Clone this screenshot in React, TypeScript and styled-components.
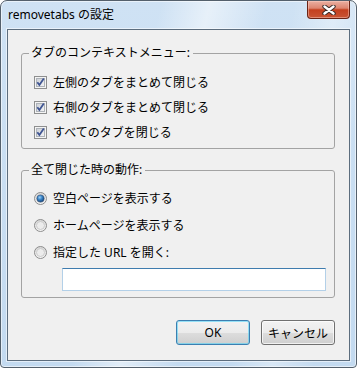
import styled, { createGlobalStyle } from 'styled-components';

const GlobalStyle = createGlobalStyle`
  html, body {
    margin: 0;
    padding: 0;
    background: #ffffff;
  }
  * {
    box-sizing: border-box;
  }
`;

const uiFont = `"Noto Sans", "Noto Sans CJK JP", sans-serif`;

const Window = styled.div`
  width: 357px;
  height: 368px;
  display: flex;
  flex-direction: column;
  padding: 0 6px 6px 6px;
  border: 1px solid #54606c;
  border-radius: 7px 7px 4px 4px;
  background:
    linear-gradient(104deg, rgba(255, 255, 255, 0) 36%, rgba(255, 255, 255, 0.5) 47%, rgba(255, 255, 255, 0) 60%),
    linear-gradient(100deg, rgba(255, 255, 255, 0) 70%, rgba(255, 255, 255, 0.35) 80%, rgba(255, 255, 255, 0) 90%),
    linear-gradient(to bottom, #cfe2f4 0%, #c3daf0 100%);
  box-shadow: inset 0 0 0 1px rgba(255, 255, 255, 0.55);
  font-family: ${uiFont};
`;

const TitleBar = styled.div`
  height: 28px;
  display: flex;
  align-items: flex-start;
  padding-left: 1px;
`;

const Title = styled.div`
  flex: 1;
  font-size: 12px;
  line-height: 16px;
  padding-top: 6px;
  color: #000;
`;

const CloseButton = styled.div`
  width: 43px;
  height: 18px;
  display: flex;
  align-items: center;
  justify-content: center;
  border: 1px solid #6a2416;
  border-top: none;
  border-radius: 0 0 4px 4px;
  background: linear-gradient(
    to bottom,
    #eab0a2 0%,
    #dd8570 42%,
    #c4401f 52%,
    #c95535 100%
  );
  box-shadow: inset 0 0 0 1px rgba(255, 210, 200, 0.45);
`;

const Client = styled.div`
  flex: 1;
  display: flex;
  flex-direction: column;
  border: 1px solid #5c6d7e;
  background: #f0f0f0;
  padding: 15px 14px 0 13px;
  box-shadow: 0 0 0 1px rgba(255, 255, 255, 0.55);
`;

const Group = styled.fieldset<{ $top: number }>`
  margin: ${({ $top }) => $top}px 0 0 0;
  padding: 0 8px 6px 12px;
  border: 1px solid #a3a3a3;
  border-radius: 3px;
  min-inline-size: 0;
  display: flex;
  flex-direction: column;
`;

const Legend = styled.legend`
  font-size: 12px;
  line-height: 16px;
  padding: 0 3px 0 2px;
  margin-left: -5px;
  color: #000;
`;

const OptionList = styled.div<{ $top: number; $gap: number }>`
  display: flex;
  flex-direction: column;
  gap: ${({ $gap }) => $gap}px;
  margin-top: ${({ $top }) => $top}px;
`;

const Option = styled.label`
  height: 20px;
  display: flex;
  align-items: center;
  gap: 6px;
  font-size: 12px;
  color: #000;
`;

const UrlInput = styled.div`
  margin: 6px 0 0 28px;
  height: 23px;
  background: #fff;
  border: 1px solid #b3d0e8;
  border-top-color: #3f7cae;
`;

const ButtonRow = styled.div`
  display: flex;
  justify-content: flex-end;
  gap: 11px;
  margin-top: 22px;
  padding-right: 0;
`;

const Button = styled.div<{ $default?: boolean }>`
  width: 74px;
  height: 25px;
  display: flex;
  align-items: center;
  justify-content: center;
  font-size: 12px;
  color: #000;
  border: 1px solid ${({ $default }) => ($default ? '#3c7fb1' : '#707070')};
  border-radius: 3px;
  background: linear-gradient(
    to bottom,
    #f2f2f2 0%,
    #ebebeb 50%,
    #dddddd 51%,
    #cfcfcf 100%
  );
  box-shadow: inset 0 0 0 1px
    ${({ $default }) => ($default ? 'rgba(72, 209, 249, 0.55)' : 'rgba(255, 255, 255, 0.7)')};
`;

const CloseGlyph = () => (
  <svg width="14" height="10" viewBox="0 0 14 10">
    <path d="M2.5 1.5 L11.5 8.5 M11.5 1.5 L2.5 8.5" stroke="#3a2a28" strokeWidth="4.4" strokeLinecap="round" />
    <path d="M2.5 1.5 L11.5 8.5 M11.5 1.5 L2.5 8.5" stroke="#ffffff" strokeWidth="2.4" strokeLinecap="round" />
  </svg>
);

const CheckBox = () => (
  <svg width="13" height="13" viewBox="0 0 13 13">
    <defs>
      <linearGradient id="cbIn" x1="0" y1="0" x2="1" y2="1">
        <stop offset="0" stopColor="#cbcfd5" />
        <stop offset="1" stopColor="#f6f6f6" />
      </linearGradient>
    </defs>
    <rect x="0.5" y="0.5" width="12" height="12" fill="#f4f4f4" stroke="#8e8f8f" />
    <rect x="2.5" y="2.5" width="8" height="8" fill="url(#cbIn)" stroke="#aeb3b9" />
    <path d="M3.3 6.2 L5.4 8.9 L9.8 2.6" fill="none" stroke="#3f5593" strokeWidth="1.8" />
  </svg>
);

const Radio = ({ checked }: { checked?: boolean }) => (
  <svg width="13" height="13" viewBox="0 0 13 13">
    <defs>
      <linearGradient id="rdOut" x1="0" y1="0" x2="0" y2="1">
        <stop offset="0" stopColor="#d6d6d6" />
        <stop offset="1" stopColor="#f7f7f7" />
      </linearGradient>
      <radialGradient id="rdDot" cx="0.4" cy="0.35" r="0.7">
        <stop offset="0" stopColor="#9fd0f5" />
        <stop offset="0.45" stopColor="#3a85c8" />
        <stop offset="1" stopColor="#123f73" />
      </radialGradient>
    </defs>
    <circle cx="6.5" cy="6.5" r="6" fill="url(#rdOut)" stroke="#8d8d8d" />
    <circle cx="6.5" cy="6.5" r="4" fill="#ececec" stroke="#c4c4c4" strokeWidth="0.8" />
    {checked && <circle cx="6.5" cy="6.5" r="3.6" fill="url(#rdDot)" stroke="#2b4f7a" strokeWidth="0.6" />}
  </svg>
);

const App = () => {
  return (
    <>
      <GlobalStyle />
      <Window>
        <TitleBar>
          <Title>removetabs の設定</Title>
          <CloseButton>
            <CloseGlyph />
          </CloseButton>
        </TitleBar>
        <Client>
          <Group $top={0}>
            <Legend>タブのコンテキストメニュー:</Legend>
            <OptionList $top={11} $gap={5}>
              <Option>
                <CheckBox />
                左側のタブをまとめて閉じる
              </Option>
              <Option>
                <CheckBox />
                右側のタブをまとめて閉じる
              </Option>
              <Option>
                <CheckBox />
                すべてのタブを閉じる
              </Option>
            </OptionList>
          </Group>
          <Group $top={13}>
            <Legend>全て閉じた時の動作:</Legend>
            <OptionList $top={10} $gap={7}>
              <Option>
                <Radio checked />
                空白ページを表示する
              </Option>
              <Option>
                <Radio />
                ホームページを表示する
              </Option>
              <Option>
                <Radio />
                指定した URL を開く:
              </Option>
            </OptionList>
            <UrlInput />
          </Group>
          <ButtonRow>
            <Button $default>OK</Button>
            <Button>キャンセル</Button>
          </ButtonRow>
        </Client>
      </Window>
    </>
  );
};

export default App;
